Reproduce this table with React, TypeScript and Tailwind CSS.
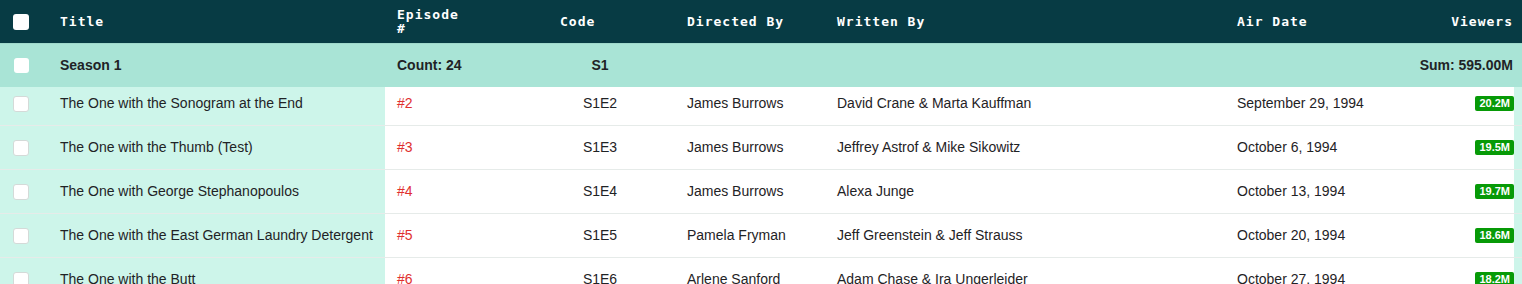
const episodes = [
  { title: "The One with the Sonogram at the End", num: 2, code: "S1E2", director: "James Burrows", writers: "David Crane & Marta Kauffman", date: "September 29, 1994", viewers: "20.2M" },
  { title: "The One with the Thumb (Test)", num: 3, code: "S1E3", director: "James Burrows", writers: "Jeffrey Astrof & Mike Sikowitz", date: "October 6, 1994", viewers: "19.5M" },
  { title: "The One with George Stephanopoulos", num: 4, code: "S1E4", director: "James Burrows", writers: "Alexa Junge", date: "October 13, 1994", viewers: "19.7M" },
  { title: "The One with the East German Laundry Detergent", num: 5, code: "S1E5", director: "Pamela Fryman", writers: "Jeff Greenstein & Jeff Strauss", date: "October 20, 1994", viewers: "18.6M" },
  { title: "The One with the Butt", num: 6, code: "S1E6", director: "Arlene Sanford", writers: "Adam Chase & Ira Ungerleider", date: "October 27, 1994", viewers: "18.2M" },
];

const sans = "font-['Liberation_Sans',Arial,sans-serif]";

function Box({ border }: { border?: boolean }) {
  return (
    <div
      className={
        "w-[16px] h-[16px] rounded-[3px] bg-white " +
        (border ? "border border-[#d4dad8]" : "")
      }
    />
  );
}

export default function App() {
  return (
    <div className={`w-[1522px] h-[284px] overflow-hidden bg-white text-[14px] text-[#1f2326] ${sans}`}>
      {/* header */}
      <div className="flex h-[44px] items-center bg-[#073b44] border-b border-[#9fd8cb] font-['DejaVu_Sans_Mono',monospace] font-bold text-white text-[13px] tracking-[1px] leading-[14px]">
        <div className="w-[48px] pl-[13px]">
          <Box />
        </div>
        <div className="w-[337px] pl-[12px]">Title</div>
        <div className="w-[163px] pl-[12px]">
          <div className="w-[72px]">Episode #</div>
        </div>
        <div className="w-[127px] pl-[12px]">Code</div>
        <div className="w-[150px] pl-[12px]">Directed By</div>
        <div className="w-[400px] pl-[12px]">Written By</div>
        <div className="w-[160px] pl-[12px]">Air Date</div>
        <div className="flex-1 pr-[9px] text-right whitespace-nowrap">Viewers</div>
      </div>

      {/* group row */}
      <div className="flex h-[43px] items-center bg-[#a9e4d6] font-bold">
        <div className="w-[48px] pl-[14px]">
          <div className="w-[15px] h-[15px] rounded-[3px] bg-white" />
        </div>
        <div className="w-[337px] pl-[12px]">Season 1</div>
        <div className="w-[163px] pl-[12px]">Count: 24</div>
        <div className="w-[127px] pl-[12px]">
          <div className="w-[80px] text-center">S1</div>
        </div>
        <div className="w-[150px]" />
        <div className="w-[400px]" />
        <div className="w-[160px]" />
        <div className="flex-1 pr-[9px] text-right whitespace-nowrap">Sum: 595.00M</div>
      </div>

      {/* body */}
      <div className="overflow-hidden">
        <div className="-mt-[5px]">
          {episodes.map((e) => (
            <div key={e.code} className="flex h-[44px] border-b border-[#e6ebe9]">
              <div className="flex w-[385px] items-center bg-[#cdf5ea]">
                <div className="w-[48px] pl-[13px]">
                  <Box border />
                </div>
                <div className="pl-[12px]">{e.title}</div>
              </div>
              <div className="flex w-[163px] items-center pl-[12px] text-[#e0302f]">#{e.num}</div>
              <div className="flex w-[127px] items-center pl-[12px]">
                <div className="w-[80px] text-center">{e.code}</div>
              </div>
              <div className="flex w-[150px] items-center pl-[12px]">{e.director}</div>
              <div className="flex w-[400px] items-center pl-[12px]">{e.writers}</div>
              <div className="flex w-[160px] items-center pl-[12px] whitespace-nowrap">{e.date}</div>
              <div className="flex flex-1 items-center justify-end">
                <span className="rounded-[2px] bg-[#079a07] px-[4px] text-[11px] font-bold leading-[15px] text-white">
                  {e.viewers}
                </span>
              </div>
              <div className="w-[8px] bg-[#cdf5ea]" />
            </div>
          ))}
        </div>
      </div>
    </div>
  );
}
